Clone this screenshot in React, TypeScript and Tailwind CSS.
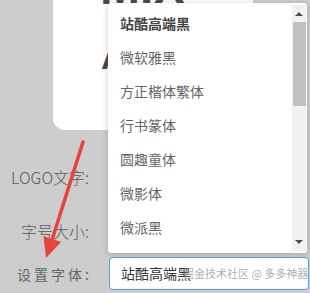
import React from "react";

const fonts = ["站酷高端黑", "微软雅黑", "方正楷体繁体", "行书篆体", "圆趣童体", "微影体", "微派黑"];

const cjk = { fontFamily: '"Noto Sans CJK SC", "Noto Sans", sans-serif' };

export default function App() {
  return (
    <div
      className="relative h-[293px] w-[310px] overflow-hidden bg-[#cdcdcd] text-[#555]"
      style={cjk}
    >
      {/* logo preview card */}
      <div className="relative ml-[53px] h-[130px] w-[200px] overflow-hidden rounded-bl-[12px] bg-white">
        <div className="absolute left-[47px] top-[-36px] text-[48px] font-bold leading-none text-[#4a4a4a]" style={{ fontFamily: '"Liberation Sans", sans-serif' }}>
          MIX
        </div>
        <div className="absolute left-[48px] top-[40px] text-[34px] font-bold leading-none text-[#4a4a4a]" style={{ fontFamily: '"Liberation Sans", sans-serif' }}>
          A
        </div>
      </div>

      {/* form rows */}
      <div className="mt-[36px] flex flex-col">
        <div className="flex h-[22px] items-center">
          <span className="w-[89px] text-right text-[16px] font-light leading-none text-[#5a5a5a]">LOGO文字:</span>
        </div>
        <div className="mt-[32px] flex h-[22px] items-center">
          <span className="w-[89px] text-right text-[16px] font-light leading-none text-[#5a5a5a]">字号大小:</span>
        </div>
        <div className="mt-[15px] flex items-center">
          <span className="w-[92px] whitespace-nowrap text-right text-[14px] leading-none tracking-[3px] text-[#666]">设置字体:</span>
          <div className="ml-[17px] flex h-[33px] w-[200px] items-center rounded-[4px] border border-[#4aa3e6] bg-white pl-[11px] text-[14px] text-[#333]">
            站酷高端黑
          </div>
        </div>
      </div>

      {/* open dropdown */}
      <div className="absolute left-[108px] top-[3px] flex h-[250px] w-[199px] rounded-[3px] bg-white shadow-[0_1px_6px_rgba(0,0,0,0.2)]">
        <ul className="flex-1 pt-[3px]">
          {fonts.map((f, i) => (
            <li
              key={f}
              className={`flex h-[34px] items-center pl-[12px] text-[14px] ${
                i === 0 ? "font-bold text-[#444]" : "text-[#666]"
              }`}
            >
              {f}
            </li>
          ))}
        </ul>
        <div className="my-[2px] mr-[1px] flex w-[14px] flex-col items-center bg-[#f1f1f1]">
          <div className="mt-[7px] h-0 w-0 border-x-[4px] border-b-[4px] border-x-transparent border-b-[#505050]" />
          <div className="mt-[6px] h-[84px] w-[13px] bg-[#c1c1c1]" />
          <div className="mt-auto mb-[7px] h-0 w-0 border-x-[4px] border-t-[4px] border-x-transparent border-t-[#505050]" />
        </div>
      </div>

      {/* watermark */}
      <div className="absolute left-[183px] top-[265px] whitespace-nowrap text-[11px] leading-[16px] text-[#999]/80">
        掘金技术社区 @ 多多神器
      </div>

      {/* annotation arrow */}
      <svg className="absolute left-0 top-0" width="310" height="293" viewBox="0 0 310 293">
        <line x1="83" y1="142" x2="52" y2="240" stroke="#e8433d" strokeWidth="3.5" strokeLinecap="round" />
        <polygon points="46,258 43.5,236 61,242" fill="#e8433d" />
      </svg>
    </div>
  );
}
